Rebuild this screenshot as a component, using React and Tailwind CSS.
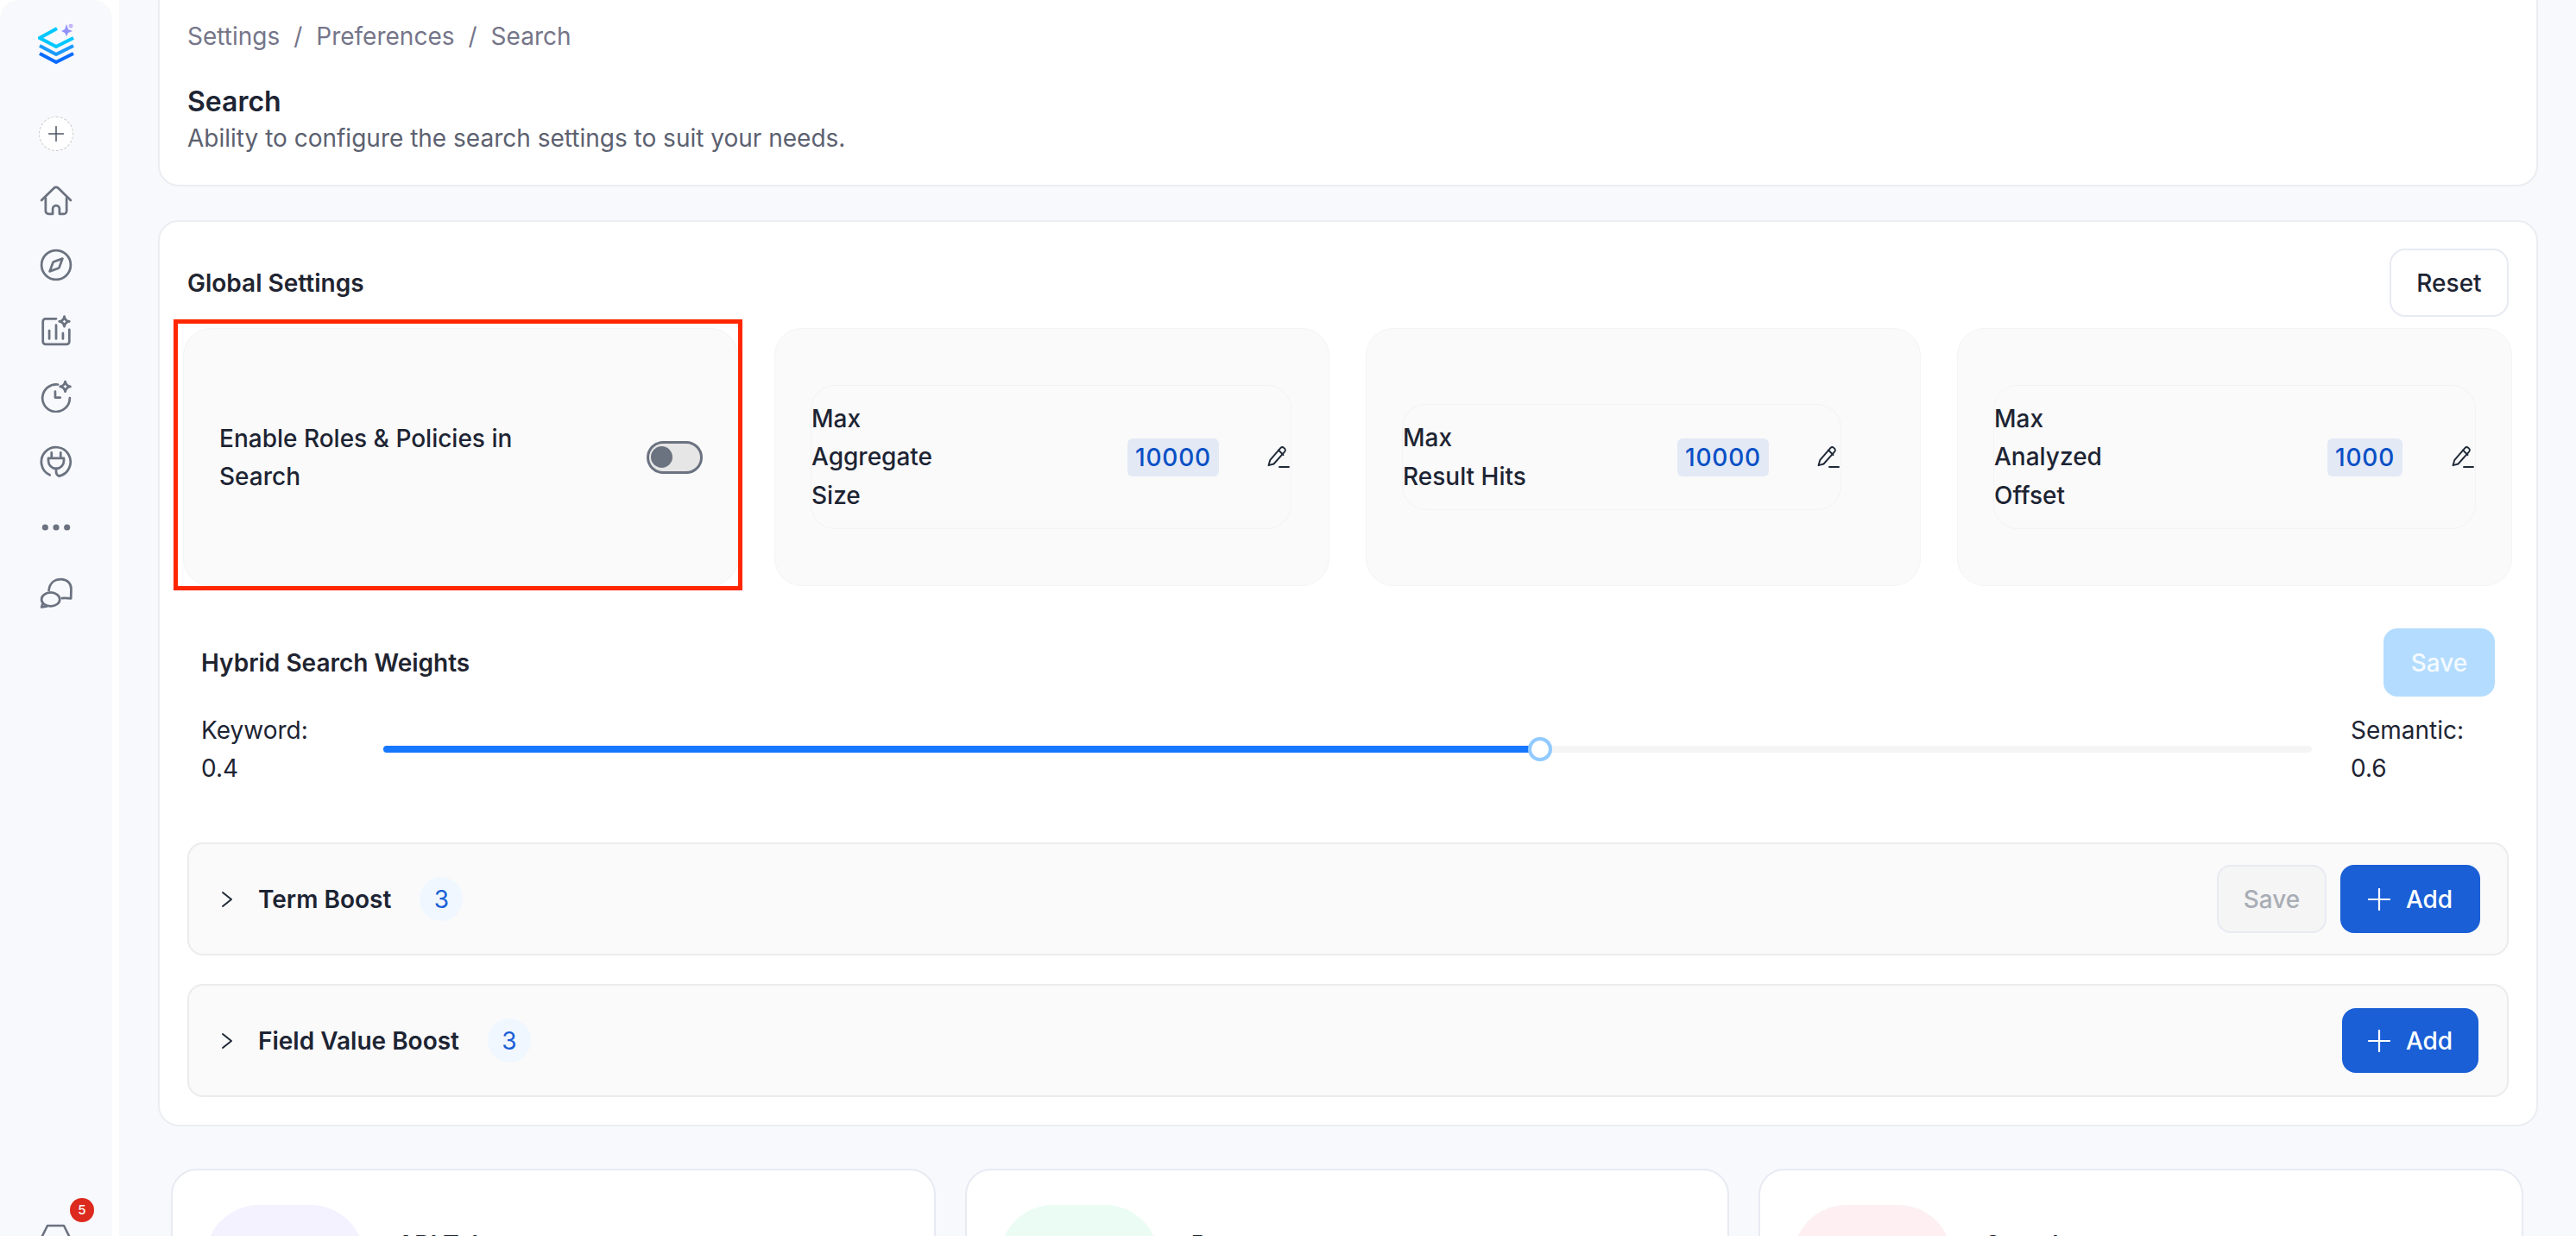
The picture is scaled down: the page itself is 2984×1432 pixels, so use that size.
import React from "react";

const stroke = { fill: "none", stroke: "#6b7280", strokeWidth: 2.6, strokeLinecap: "round", strokeLinejoin: "round" };
const S = 38;

function Logo() {
  return (
    <svg width="42" height="47" viewBox="44 28 42 47" className="block">
      <g fill="none" strokeWidth="4" strokeLinejoin="miter">
        <path d="M66 33 L46 44 L65 54 L85 44" stroke="#00c8ff" />
        <path d="M46 53 L65 63 L85 53" stroke="#1a9bfc" />
        <path d="M46 62 L65 72 L85 62" stroke="#0a6cff" />
      </g>
      <path d="M77 28 L79 34 L84 36 L79 38 L77 42 L75 38 L71 36 L75 34 Z" fill="#8080ff" opacity="0.85" />
      <circle cx="82" cy="30" r="2.5" fill="#c4b5fd" />
    </svg>
  );
}

function HomeIcon() {
  return (
    <svg width={S} height={S} viewBox="0 0 36 36" {...stroke}>
      <path d="M2 17 15.800 3.600a3 3 0 0 1 4.400 0L34 17" />
      <path d="M6.500 14.500V29a3 3 0 0 0 3 3h4.800v-5.500a3.700 3.700 0 0 1 7.400 0V32h4.800a3 3 0 0 0 3-3V14.500" />
    </svg>
  );
}
function CompassIcon() {
  return (
    <svg width={S} height={S} viewBox="0 0 36 36" {...stroke}>
      <circle cx="18" cy="18" r="16" />
      <path d="M25 11 21.500 20.500a2 2 0 0 1-1 1L11 25l3.500-9.500a2 2 0 0 1 1-1Z" />
    </svg>
  );
}
function ChartIcon() {
  return (
    <svg width={S} height={S} viewBox="0 0 36 36" {...stroke}>
      <path d="M18 5H6.500a3 3 0 0 0-3 3v22a3 3 0 0 0 3 3h23a3 3 0 0 0 3-3V17" />
      <path d="M10.500 27V18M18 27V12M25.500 27V21" />
      <path d="M27 2.500c.6 3.400 2 4.900 5.500 5.500-3.500.6-4.900 2.100-5.500 5.500-.6-3.400-2-4.900-5.500-5.500 3.500-.6 4.900-2.100 5.500-5.500Z" />
    </svg>
  );
}
function ClockIcon() {
  return (
    <svg width={S} height={S} viewBox="0 0 36 36" {...stroke}>
      <path d="M20 5.200A15 15 0 1 0 33 20" />
      <path d="M17 13v6.500h5.500" />
      <path d="M28 2c.6 3.400 2 4.900 5.500 5.500-3.500.6-4.900 2.100-5.500 5.500-.6-3.400-2-4.900-5.500-5.500C26 6.900 27.400 5.400 28 2Z" />
    </svg>
  );
}
function PlugIcon() {
  return (
    <svg width={S} height={S} viewBox="0 0 36 36" {...stroke}>
      <path d="M11 32.500A16 16 0 1 1 21 33.700" />
      <path d="M13 8v6M23 8v6M9.500 14h17v3a8.500 8.500 0 0 1-8.500 8.500A8.500 8.500 0 0 1 9.500 17Z" />
      <path d="M18 25.500v3a5 5 0 0 0 3 5" />
    </svg>
  );
}
function DotsIcon() {
  return (
    <svg width={S} height={S} viewBox="0 0 36 36" fill="#6b7280">
      <circle cx="6" cy="18" r="3.400" />
      <circle cx="18" cy="18" r="3.400" />
      <circle cx="30" cy="18" r="3.400" />
    </svg>
  );
}
function ChatIcon() {
  return (
    <svg width={S} height={S} viewBox="0 0 36 36" {...stroke}>
      <path d="M10 15C11 7 16.500 3 23.500 3 30 3 34.500 7.500 34.500 13.500c0 3.500-.2 7.500-.2 10.500-3.300-.4-6.300-.4-9.800-.3" />
      <ellipse cx="12" cy="25" rx="10" ry="7.500" />
      <path d="M3.500 29 2 33.500 8 32.500" />
    </svg>
  );
}
function PencilIcon() {
  return (
    <svg width="28" height="28" viewBox="0 0 28 28" fill="none" stroke="#1f2937" strokeWidth="1.900" strokeLinecap="round" strokeLinejoin="round" className="shrink-0">
      <path d="M16.500 2.800a2.600 2.600 0 0 1 3.700 0l.9.900a2.600 2.600 0 0 1 0 3.700L8.500 21.500l-6 1.700 1.700-6Z" />
      <path d="M14 5.500l5.500 5.500" />
      <path d="M15 25h11" />
    </svg>
  );
}
function Chevron() {
  return (
    <svg width="14" height="22" viewBox="0 0 14 22" fill="none" stroke="#1f2937" strokeWidth="2" strokeLinecap="round" strokeLinejoin="round" className="shrink-0">
      <path d="M2 3l10 8-10 8" />
    </svg>
  );
}
function PlusIcon({ size = 26, color = "#ffffff" }) {
  return (
    <svg width={size} height={size} viewBox="0 0 26 26" fill="none" stroke={color} strokeWidth="2.200" strokeLinecap="round" className="shrink-0">
      <path d="M13 1v24M1 13h24" />
    </svg>
  );
}

function Sidebar() {
  const icons = [
    <HomeIcon key="h" />,
    <CompassIcon key="c" />,
    <ChartIcon key="g" />,
    <ClockIcon key="k" />,
    <PlugIcon key="p" />,
    <DotsIcon key="d" />,
    <ChatIcon key="m" />,
  ];
  return (
    <aside className="relative flex h-full w-[130px] shrink-0 flex-col items-center rounded-t-[22px] bg-[#f8f9fc] pt-[28px]">
      <Logo />
      <div className="mt-[60px] flex h-[40px] w-[40px] items-center justify-center rounded-full border border-dashed border-[#c9c9c9] bg-white">
        <PlusIcon size={18} color="#4b5563" />
      </div>
      <div className="mt-[39px] flex flex-col gap-[38px] [&>*:first-child]:-mb-[2px]">{icons}</div>
      <span className="absolute left-[81px] top-[1388px] flex h-[28px] w-[28px] items-center justify-center rounded-full bg-[#dc2a1e] text-[15px] font-medium text-white">
        5
      </span>
      <svg width="36" height="30" viewBox="0 0 36 30" className="absolute left-[47px] top-[1417px]" {...stroke}>
        <path d="M8 3h19l7 14M8 3 1 17" />
      </svg>
    </aside>
  );
}

function Field({ lines, value, innerW, textW, badgeW, pencilGap }) {
  return (
    <div className="flex h-[299px] items-center rounded-[32px] border border-[#f4f4f4] bg-[#fafafa] pl-[41px]">
      <div className={`flex items-center rounded-[28px] border border-[#f3f3f3] py-[16px] ${innerW}`}>
        <div className={`text-[28px] font-medium leading-[44.500px] text-[#1d2433] ${textW}`}>
          {lines.map((l) => (
            <div key={l}>{l}</div>
          ))}
        </div>
        <span className={`ml-auto flex h-[44px] items-center justify-center rounded-[6px] bg-[#e3e9f5] text-[28px] font-medium tracking-[0.800px] text-[#0950c5] ${badgeW}`}>
          {value}
        </span>
        <span className={pencilGap}>
          <PencilIcon />
        </span>
      </div>
    </div>
  );
}

function BoostRow({ title, children, pr }) {
  return (
    <div className={`flex h-[131px] items-center rounded-[18px] border-2 border-[#ececec] bg-[#fafafa] pl-[37px] ${pr}`}>
      <Chevron />
      <span className="ml-[29px] text-[28px] font-semibold text-[#1d2433]">{title}</span>
      <span className="ml-[33px] flex h-[51px] w-[50px] items-center justify-center rounded-full bg-[#f0f7ff] text-[28px] text-[#1a5fd6]">
        3
      </span>
      <div className="ml-auto flex items-center gap-[16px]">{children}</div>
    </div>
  );
}

function AddButton({ w, h }) {
  return (
    <button className={`flex items-center justify-center gap-[18px] rounded-[16px] bg-[#1a5fd6] text-[28px] font-medium text-white ${w} ${h}`}>
      <PlusIcon />
      Add
    </button>
  );
}

function BottomCard({ tint, title, indent }) {
  return (
    <div className="flex h-[200px] rounded-[30px] border-2 border-[#e8eaf3] bg-white pl-[38px] pt-[40px]">
      <div className={`h-[180px] w-[184px] shrink-0 rounded-[62px] ${tint}`} />
      <div className={`mt-[31px] text-[28px] font-semibold leading-[30px] text-[#1d2433] ${indent}`}>{title}</div>
    </div>
  );
}

export default function App() {
  return (
    <div className="flex h-[1432px] w-[2984px] overflow-hidden bg-white [font-family:Inter,sans-serif]">
      <Sidebar />
      <main className="ml-[8px] h-full flex-1 overflow-hidden bg-[#f8f9fc] pl-[45px] pr-[44px]">
        <section className="-mt-[20px] h-[236px] rounded-[24px] border-2 border-[#ebedf2] bg-white pl-[32px] pt-[40px]">
          <nav className="flex items-center gap-[16px] text-[28px] leading-[40px] text-[#757589]">
            <span>Settings</span>
            <span>/</span>
            <span>Preferences</span>
            <span>/</span>
            <span>Search</span>
          </nav>
          <h1 className="mt-[34px] text-[32px] font-semibold leading-[44px] text-[#1d2433]">Search</h1>
          <p className="text-[28px] leading-[40px] text-[#5c6170]">Ability to configure the search settings to suit your needs.</p>
        </section>

        <section className="mt-[39px] rounded-[24px] border-2 border-[#ebedf2] bg-white px-[32px] pt-[31px]">
          <div className="flex h-[79px] items-center justify-between">
            <h2 className="text-[28px] font-semibold text-[#1f2430]">Global Settings</h2>
            <button className="flex h-[79px] w-[138px] items-center justify-center rounded-[18px] border-2 border-[#e8eaf3] bg-white text-[28px] font-medium text-[#1d2433]">
              Reset
            </button>
          </div>

          <div className="-ml-[5px] -mr-[4px] mt-[13px] grid grid-cols-4 gap-[42px]">
            <div className="relative flex h-[299px] items-center justify-between rounded-[32px] border border-[#f4f4f4] bg-[#fafafa] pl-[41px] pr-[40px]">
              <div className="w-[360px] text-[28px] font-medium leading-[44px] text-[#1d2433]">Enable Roles &amp; Policies in Search</div>
              <div className="flex h-[38px] w-[65px] items-center rounded-full border-[3px] border-[#6b7280] bg-[#e6e6e6] pl-[2px]">
                <span className="h-[25px] w-[25px] rounded-full bg-[#6b7280]" />
              </div>
              <div className="pointer-events-none absolute -bottom-[6px] -left-[12px] -right-[6px] -top-[11px] border-[5px] border-[#ff2600]" />
            </div>
            <Field lines={["Max", "Aggregate", "Size"]} value="10000" innerW="w-[557px]" textW="w-[160px]" badgeW="w-[106px]" pencilGap="ml-[55px]" />
            <Field lines={["Max", "Result Hits"]} value="10000" innerW="w-[509px]" textW="w-[170px]" badgeW="w-[106px]" pencilGap="ml-[55px]" />
            <Field lines={["Max", "Analyzed", "Offset"]} value="1000" innerW="w-[559px]" textW="w-[160px]" badgeW="w-[87px]" pencilGap="ml-[56px]" />
          </div>

          <div className="mx-[16px] mt-[49px] flex h-[79px] items-center justify-between">
            <h3 className="text-[28px] font-semibold text-[#1f2430]">Hybrid Search Weights</h3>
            <button className="h-[79px] w-[129px] rounded-[16px] bg-[#b3dcff] text-[28px] font-medium text-white/85">Save</button>
          </div>

          <div className="mx-[16px] mt-[17px] flex items-center text-[28px] leading-[44px] text-[#1d2433]">
            <div className="w-[211px] shrink-0">
              <div>Keyword:</div>
              <div>0.4</div>
            </div>
            <div className="relative h-[8px] flex-1 rounded-full bg-[#f5f5f5]">
              <div className="h-full w-[60%] rounded-l-full bg-[#1677ff]" />
              <span className="absolute left-[60%] top-1/2 h-[28px] w-[28px] -translate-x-1/2 -translate-y-1/2 rounded-full border-4 border-[#91caff] bg-white" />
            </div>
            <div className="ml-[45px] w-[167px] shrink-0">
              <div>Semantic:</div>
              <div>0.6</div>
            </div>
          </div>

          <div className="mt-[64px]">
            <BoostRow title="Term Boost" pr="pr-[31px]">
              <button className="h-[79px] w-[127px] rounded-[16px] border-2 border-[#e8eaf3] bg-[#f5f5f5] text-[28px] font-medium text-[#a8adb5]">Save</button>
              <AddButton w="w-[162px]" h="h-[79px]" />
            </BoostRow>
          </div>
          <div className="mt-[33px] pb-[32px]">
            <BoostRow title="Field Value Boost" pr="pr-[33px]">
              <AddButton w="w-[158px]" h="h-[75px]" />
            </BoostRow>
          </div>
        </section>

        <div className="ml-[15px] mr-[17px] mt-[49px] grid grid-cols-3 gap-[34px]">
          <BottomCard tint="bg-[#f4f2fe]" title="API Tokens" indent="ml-[38px]" />
          <BottomCard tint="bg-[#eafcf3]" title="Bots" indent="ml-[38px]" />
          <BottomCard tint="bg-[#fdeff2]" title="Search" indent="ml-[38px]" />
        </div>
      </main>
    </div>
  );
}
